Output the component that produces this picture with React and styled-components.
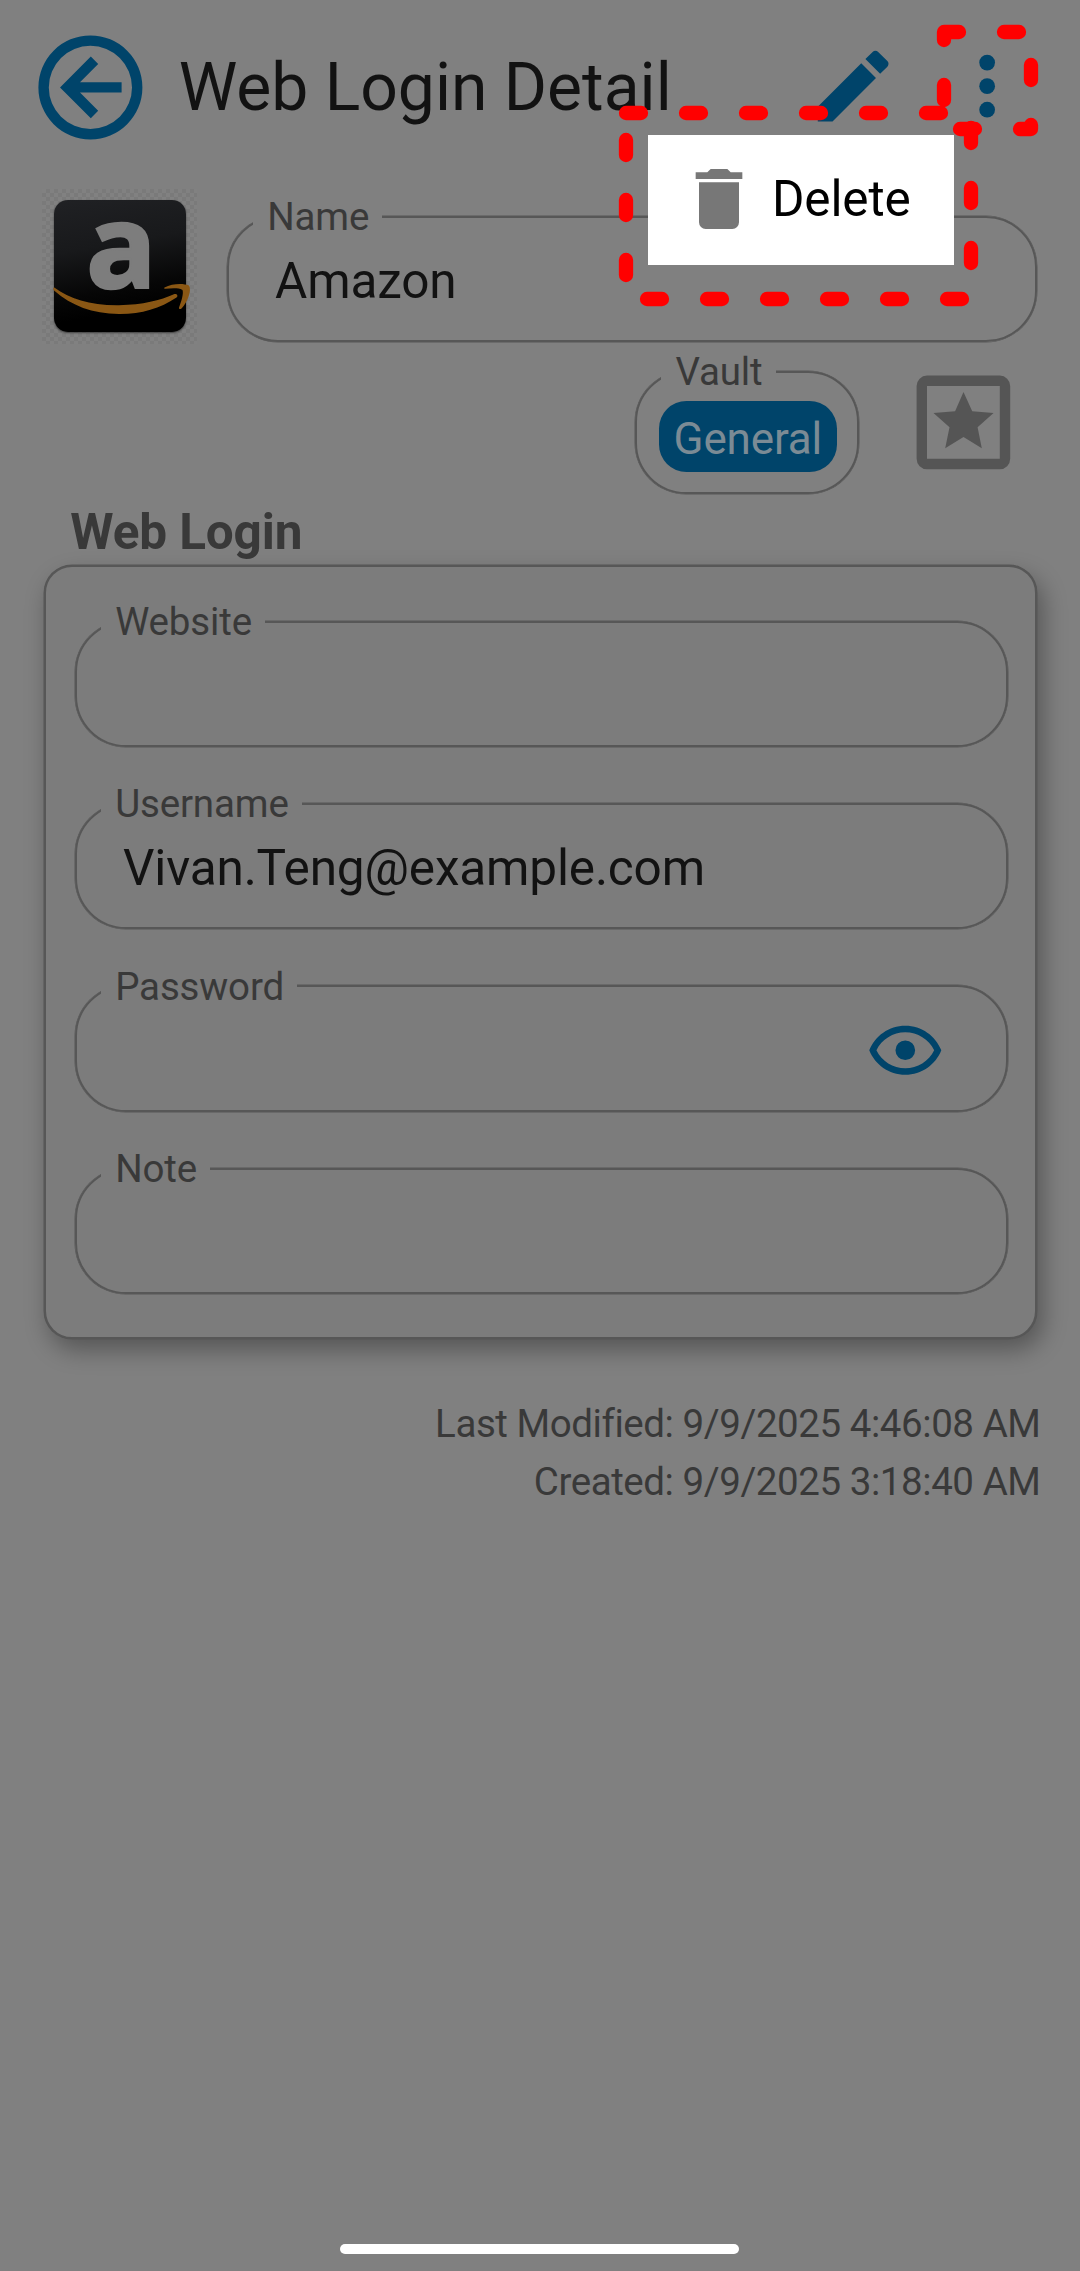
import React from "react";
import styled, { createGlobalStyle } from "styled-components";

const c = {
  page: "#808080",
  card: "#7c7c7c",
  line: "#575757",
  blue: "#00446a",
  label: "#393939",
  ink: "#121212",
};

const GlobalStyle = createGlobalStyle`
  *, *::before, *::after { box-sizing: border-box; }
  body { margin: 0; background: ${c.page}; }
`;

const Screen = styled.main`
  position: relative;
  display: flex;
  flex-direction: column;
  width: 1080px;
  height: 2271px;
  overflow: hidden;
  background: ${c.page};
  color: ${c.ink};
  font-family: Roboto, "Liberation Sans", sans-serif;
`;

const Header = styled.header`
  display: flex;
  align-items: center;
  height: 172px;
  padding: 3px 46px 0 27.6px;
`;

const Title = styled.h1`
  flex: 1;
  margin: 0 0 0 26.3px;
  font-size: 66px;
  font-weight: 400;
  line-height: 78px;
  white-space: nowrap;
`;

const Icon = styled.svg`
  display: block;
  flex: none;
  width: ${(p) => p.$size}px;
  height: ${(p) => p.$size}px;
  fill: ${(p) => p.$color || c.blue};
`;

const Actions = styled.div`
  display: flex;
  gap: 39.3px;
  margin-top: -3.4px;
`;

const NameRow = styled.section`
  display: flex;
  align-items: flex-end;
  height: 155px;
  margin-top: 17px;
  padding: 0 42.7px 1.7px 42px;
  gap: 29.7px;
`;

const Logo = styled.div`
  position: relative;
  flex: none;
  width: 155px;
  height: 155px;
  margin-bottom: -1.7px;
  background: repeating-conic-gradient(#7a7a7a 0 25%, #818181 0 50%) 0 0 / 8px 8px;
`;

const LogoTile = styled.div`
  position: absolute;
  left: 12px;
  top: 11px;
  width: 132px;
  height: 132px;
  border-radius: 14px;
  background: linear-gradient(170deg, #202124 0%, #18191b 35%, #060606 65%, #000 80%);
  box-shadow: 0 1px 2px rgba(0, 0, 0, 0.5);
`;

const LogoLetter = styled.span`
  position: absolute;
  left: 44px;
  top: -21px;
  color: #7d7d7d;
  font: 700 117px/150px "Open Sans", sans-serif;
  -webkit-text-stroke: 2.5px #7d7d7d;
`;

const Smile = styled.svg`
  position: absolute;
  inset: 0;
  width: 155px;
  height: 155px;
  fill: #8a5714;
`;

const Field = styled.div`
  position: relative;
  display: flex;
  align-items: center;
  flex: ${(p) => (p.$grow ? 1 : "none")};
  height: ${(p) => p.$height || 126.4}px;
  padding: 3.6px 61.5px 0 46.3px;
  border: 2px solid ${c.line};
  border-radius: 51px;
  box-shadow: 0 0 0 0.5px ${c.line};
`;

const Label = styled.span`
  position: absolute;
  left: 24.3px;
  top: -23.8px;
  padding: 0 13.3px 0 14.2px;
  background: ${(p) => p.$bg || c.page};
  color: ${c.label};
  font-size: 38.5px;
  line-height: 46px;
  letter-spacing: -0.15px;
  white-space: nowrap;
`;

const Value = styled.span`
  flex: 1;
  font-size: 49.5px;
  line-height: 58px;
  letter-spacing: -0.15px;
`;

const VaultRow = styled.section`
  display: flex;
  justify-content: flex-end;
  align-items: flex-start;
  height: 155px;
  padding: 16.1px 53.8px 0 0;
  gap: 42.1px;
`;

const VaultField = styled(Field)`
  width: 224.3px;
  margin-top: 10.6px;
  padding: 9px 0 0 1.4px;
  justify-content: center;
`;

const Chip = styled.span`
  display: flex;
  justify-content: center;
  align-items: center;
  width: 178px;
  height: 71px;
  padding-top: 5px;
  border-radius: 27.5px;
  background: ${c.blue};
  color: #7b8b95;
  font-size: 44px;
  letter-spacing: -0.15px;
`;

const SectionTitle = styled.h2`
  margin: 0;
  padding-left: 70.3px;
  color: ${c.label};
  font-size: 49.5px;
  font-weight: 700;
  line-height: 66px;
  letter-spacing: -0.15px;
`;

const Card = styled.section`
  display: flex;
  flex-direction: column;
  gap: 56px;
  height: 774px;
  margin: 0 42.7px 0 44px;
  padding: 53.6px 27px 0 28.7px;
  border: 2px solid ${c.line};
  border-radius: 28px;
  background: ${c.card};
  box-shadow: 0 0 0 0.5px ${c.line}, 5.5px 11px 24px rgba(0, 0, 0, 0.33);
`;

const Stamps = styled.footer`
  margin-top: 56px;
  padding-right: 39.5px;
  color: ${c.label};
  font-size: 38.5px;
  line-height: 58px;
  letter-spacing: -0.44px;
  text-align: right;
`;

const Stamp = styled.div``;

const HomeBar = styled.div`
  align-self: center;
  width: 399px;
  height: 10px;
  margin: auto 1px 17px 0;
  border-radius: 5px;
  background: #fff;
`;

const Menu = styled.div`
  position: absolute;
  left: 648px;
  top: 135px;
  display: flex;
  align-items: center;
  width: 306px;
  height: 130px;
  padding: 0 0 2px 31px;
  background: #fff;
`;

const MenuText = styled.span`
  margin-left: 13px;
  color: #000;
  font-size: 49.5px;
  line-height: 58px;
  letter-spacing: -0.15px;
`;

const Marks = styled.svg`
  position: absolute;
  left: 0;
  top: 0;
  width: 1080px;
  height: 330px;
  fill: none;
  stroke: #f00;
  stroke-width: 14.3px;
  stroke-linecap: round;
  stroke-linejoin: round;
  stroke-dasharray: 15 45;
  pointer-events: none;
`;

const DetailField = ({ label, value, children }) => (
  <Field>
    <Label $bg={c.card}>{label}</Label>
    <Value>{value}</Value>
    {children}
  </Field>
);

export default function App() {
  return (
    <Screen>
      <GlobalStyle />
      <Header>
        <Icon $size={124.8} viewBox="0 0 24 24">
          <path d="M18,11V13H10L13.5,16.5L12.08,17.92L6.16,12L12.08,6.08L13.5,7.5L10,11H18M2,12A10,10 0 0,1 12,2A10,10 0 0,1 22,12A10,10 0 0,1 12,22A10,10 0 0,1 2,12M4,12A8,8 0 0,0 12,20A8,8 0 0,0 20,12A8,8 0 0,0 12,4A8,8 0 0,0 4,12Z" />
        </Icon>
        <Title>Web Login Detail</Title>
        <Actions>
          <Icon $size={94.3} viewBox="0 0 24 24">
            <path d="M20.71,7.04C21.1,6.65 21.1,6 20.71,5.63L18.37,3.29C18,2.9 17.35,2.9 16.96,3.29L15.12,5.12L18.87,8.87M3,17.25V21H6.75L17.81,9.93L14.06,6.18L3,17.25Z" />
          </Icon>
          <Icon $size={94.3} viewBox="0 0 24 24">
            <circle cx="12" cy="6" r="2" />
            <circle cx="12" cy="12" r="2" />
            <circle cx="12" cy="18" r="2" />
          </Icon>
        </Actions>
      </Header>

      <NameRow>
        <Logo>
          <LogoTile />
          <LogoLetter>a</LogoLetter>
          <Smile viewBox="0 0 155 155">
            <path d="M12.3,98.5C28,110 48,116.5 77,116.2C101,115.7 118,111.5 132.5,105C135,104.5 136.5,107 134.5,108.5C118,119.5 99,125.2 77,125C50,124.5 30,117 12,101.5C11,100 11,98.5 12.3,98.5Z" />
            <path d="M122.5,98.5C130,94.5 141,94 147,96.5C150,101 145.5,113.5 139.5,119.5C137.5,121 136.5,119.5 137.2,118C139.5,112 141.8,104.5 140.5,101C136,98.5 129,99.5 123.5,99.8C122,99.8 121.8,99 122.5,98.5Z" />
          </Smile>
        </Logo>
        <Field $grow>
          <Label>Name</Label>
          <Value>Amazon</Value>
        </Field>
      </NameRow>

      <VaultRow>
        <VaultField $height={123.6}>
          <Label>Vault</Label>
          <Chip>General</Chip>
        </VaultField>
        <Icon $size={124.8} $color="#555" viewBox="0 0 24 24">
          <path d="M5,3H19A2,2 0 0,1 21,5V19A2,2 0 0,1 19,21H5A2,2 0 0,1 3,19V5A2,2 0 0,1 5,3M5,5V19H19V5H5M12.02,6.13L13.7,9.85L17.8,10.2L14.73,12.93L15.54,16.97L12.02,14.8L8.5,16.97L9.33,12.93L6.25,10.2L10.4,9.85Z" />
        </Icon>
      </VaultRow>

      <SectionTitle>Web Login</SectionTitle>
      <Card>
        <DetailField label="Website" />
        <DetailField label="Username" value="Vivan.Teng@example.com" />
        <DetailField label="Password">
          <Icon $size={78.6} viewBox="0 0 24 24">
            <path d="M12,9A3,3 0 0,1 15,12A3,3 0 0,1 12,15A3,3 0 0,1 9,12A3,3 0 0,1 12,9M12,4.5C17,4.5 21.27,7.61 23,12C21.27,16.39 17,19.5 12,19.5C7,19.5 2.73,16.39 1,12C2.73,7.61 7,4.5 12,4.5M3.18,12C4.83,15.36 8.24,17.5 12,17.5C15.76,17.5 19.17,15.36 20.82,12C19.17,8.64 15.76,6.5 12,6.5C8.24,6.5 4.83,8.64 3.18,12Z" />
          </Icon>
        </DetailField>
        <DetailField label="Note" />
      </Card>

      <Stamps>
        <Stamp>Last Modified: 9/9/2025 4:46:08 AM</Stamp>
        <Stamp>Created: 9/9/2025 3:18:40 AM</Stamp>
      </Stamps>

      <HomeBar />

      <Menu>
        <Icon $size={80} $color="#777" viewBox="0 0 24 24">
          <path d="M19,4H15.5L14.5,3H9.5L8.5,4H5V6H19V4M6,19A2,2 0 0,0 8,21H16A2,2 0 0,0 18,19V7H6V19Z" />
        </Icon>
        <MenuText>Delete</MenuText>
      </Menu>
      <Marks viewBox="0 0 1080 330">
        <rect x="626" y="113" width="345" height="186" />
        <rect x="944" y="32" width="87" height="97" />
      </Marks>
    </Screen>
  );
}
